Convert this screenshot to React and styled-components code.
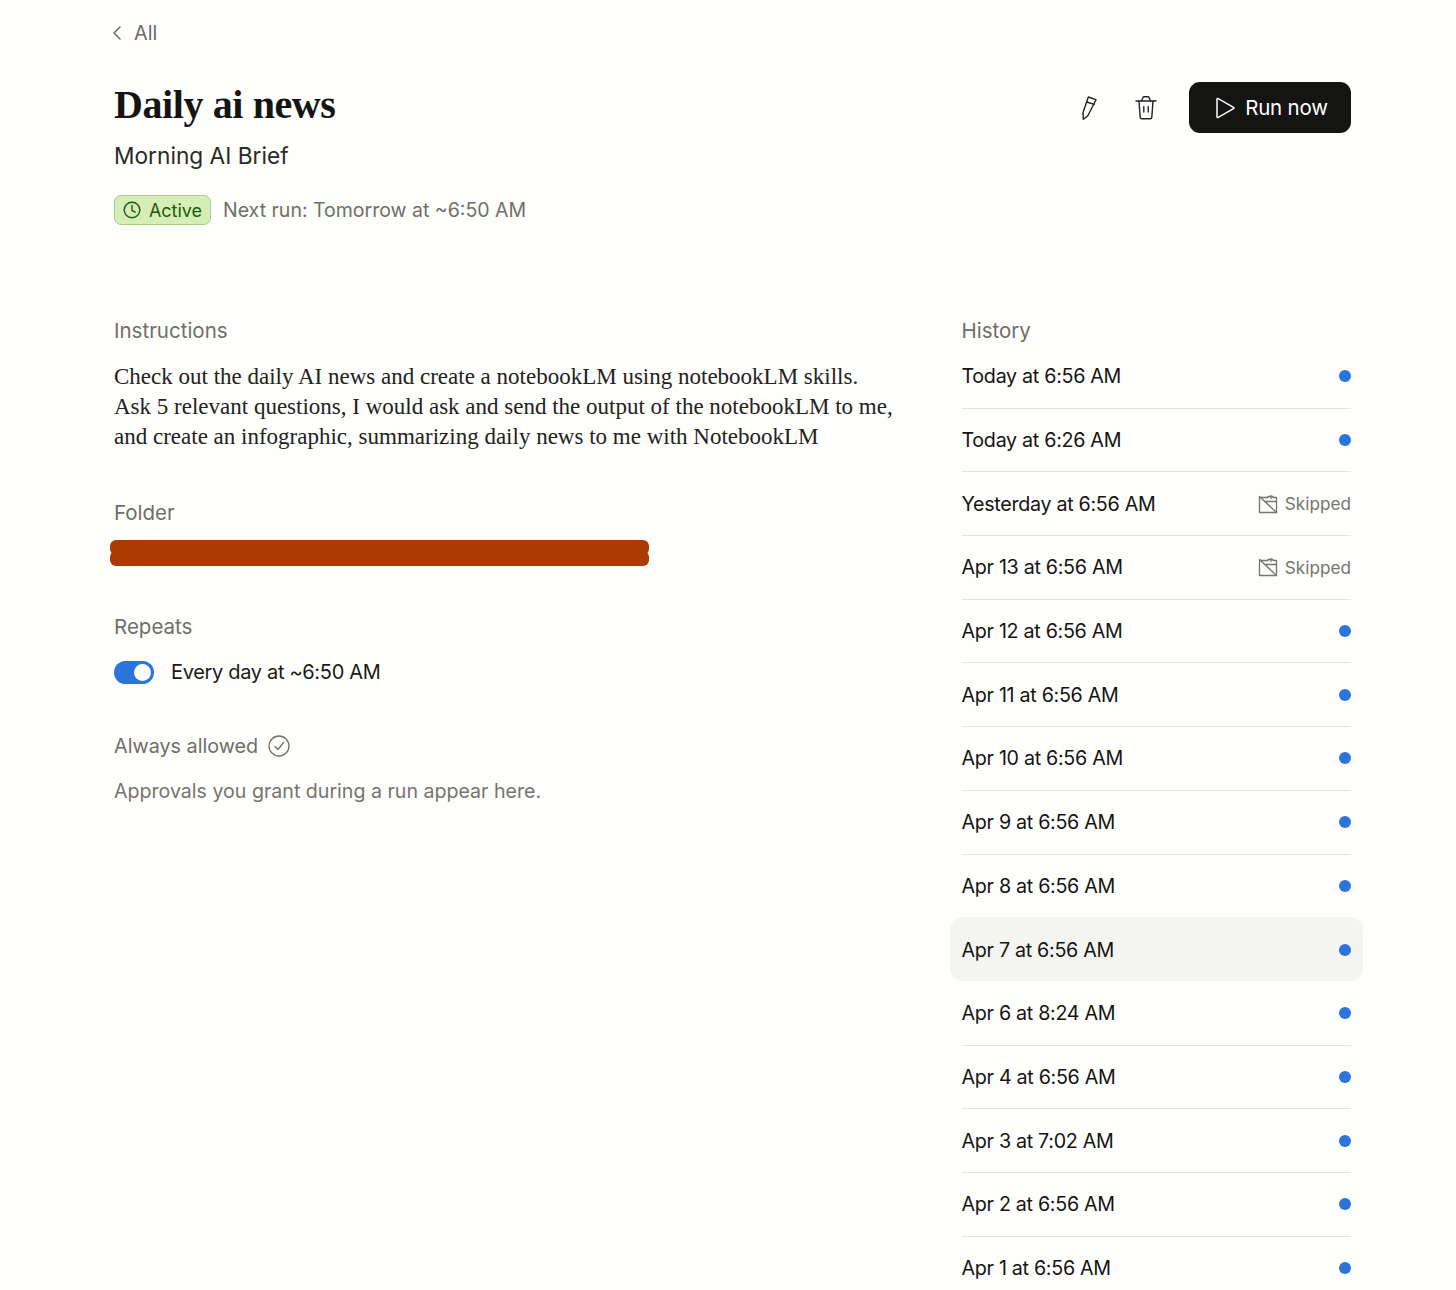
import React from 'react';
import styled, { createGlobalStyle } from 'styled-components';

const Global = createGlobalStyle`
  html, body { margin: 0; padding: 0; background: #fefefc; }
  body { font-family: "Inter", "Liberation Sans", sans-serif; color: #141413; }
`;
const Page = styled.div`
  width: 1456px; height: 1290px; overflow: hidden; box-sizing: border-box;
  padding: 0 105px 0 114px; background: #fefefc;
`;
const Back = styled.div`
  height: 66px; display: flex; align-items: center; gap: 12px; margin-left: -2px;
  color: #6b6a66; font-size: 19.8px;
`;
const Header = styled.header`
  display: flex; justify-content: space-between; align-items: flex-start; height: 251px;
`;
const HeaderText = styled.div`display: flex; flex-direction: column;`;
const Title = styled.h1`
  margin: 16px 0 0; font: 700 40px/46px "Liberation Serif", serif; letter-spacing: -0.4px; color: #141413;
`;
const Subtitle = styled.div`margin-top: 12px; font-size: 22.7px; line-height: 32px; color: #2a2a28;`;
const StatusRow = styled.div`margin-top: 23px; display: flex; align-items: center; gap: 12px;`;
const Badge = styled.div`
  height: 30px; width: 97px; box-sizing: border-box; display: flex; align-items: center; justify-content: center; gap: 8px;
  border: 1px solid #a9cf84; border-radius: 7px; background: #d5edb6; color: #1f5a0c; font-size: 18px;
`;
const Muted = styled.span`color: #6f6e69; font-size: 19.5px;`;
const Actions = styled.div`display: flex; align-items: center; margin-top: 16px;`;
const IconBtn = styled.button`
  width: 26px; height: 26px; padding: 0; border: 0; background: none; color: #222; display: flex; align-items: center; justify-content: center;
  margin-right: ${p => p.$mr}px;
`;
const RunBtn = styled.button`
  width: 162px; height: 51px; border: 0; border-radius: 11px; background: #141413; color: #fff;
  display: flex; align-items: center; justify-content: center; gap: 9px; font: 400 20.5px "Inter", sans-serif; letter-spacing: -0.2px; padding: 0 0 0 2px;
`;
const Columns = styled.div`
  display: grid; grid-template-columns: 778px 389.5px; column-gap: 69.5px; align-items: start;
`;
const Label = styled.div`color: #6f6e69; font-size: ${p => p.$size || 20.5}px; line-height: 28px; display: flex; align-items: center; gap: 10px;`;
const Prose = styled.p`
  margin: 17px 0 0; font: 400 23px/30px "Liberation Serif", serif; color: #222220; white-space: nowrap;
`;
const Section = styled.section`margin-top: ${p => p.$mt}px;`;
const Redact = styled.div`margin: 13px 0 0 -4px; width: 539px;`;
const RedactStrip = styled.div`
  height: 15px; border-radius: 6px; background: #ab3b00; & + & { margin-top: -4px; }
`;
const RepeatRow = styled.div`margin-top: 16px; display: flex; align-items: center; gap: 17px; font-size: 20px; letter-spacing: -0.33px; color: #1a1a18; line-height: 30px;`;
const Toggle = styled.div`
  width: 40px; height: 23px; border-radius: 12px; background: #2a74dc; display: flex; align-items: center; justify-content: flex-end; padding-right: 3px; box-sizing: border-box;
`;
const Knob = styled.div`width: 17px; height: 17px; border-radius: 50%; background: #fff;`;
const Hint = styled.div`margin-top: 17px; color: #76756f; font-size: 19.6px; line-height: 28px;`;
const Rows = styled.ul`list-style: none; margin: 0; padding: 0;`;
const Row = styled.li`
  position: relative; height: 63.7px; box-sizing: border-box; display: flex; align-items: center; justify-content: space-between;
  border-bottom: ${p => p.$noLine ? 'none' : '1px solid #e5e4e0'}; font-size: 19.7px; letter-spacing: -0.3px; color: #141413;
  ${p => p.$active && `
    &::before { content: ''; position: absolute; inset: -1px -12px 1px; background: #f4f4f1; border-radius: 13px; }
    & > * { position: relative; }
  `}
`;
const Dot = styled.span`width: 12px; height: 12px; border-radius: 50%; background: #2a74dc;`;
const Skipped = styled.span`display: flex; align-items: center; gap: 7px; color: #76756f; font-size: 17.2px; letter-spacing: 0;`;

const runs = [
  'Today at 6:56 AM', 'Today at 6:26 AM', 'Yesterday at 6:56 AM', 'Apr 13 at 6:56 AM', 'Apr 12 at 6:56 AM',
  'Apr 11 at 6:56 AM', 'Apr 10 at 6:56 AM', 'Apr 9 at 6:56 AM', 'Apr 8 at 6:56 AM', 'Apr 7 at 6:56 AM',
  'Apr 6 at 8:24 AM', 'Apr 4 at 6:56 AM', 'Apr 3 at 7:02 AM', 'Apr 2 at 6:56 AM', 'Apr 1 at 6:56 AM',
];

const Stroke = { fill: 'none', stroke: 'currentColor', strokeLinecap: 'round', strokeLinejoin: 'round' };

const Chevron = () => (
  <svg width="10" height="16" viewBox="0 0 10 16" {...Stroke} strokeWidth="1.5"><path d="M8 2 2 8l6 6" /></svg>
);
const Clock = () => (
  <svg width="18" height="18" viewBox="0 0 18 18" {...Stroke} strokeWidth="1.4"><circle cx="9" cy="9" r="7.8" /><path d="M9 4.5V9.5l3.2 1.600" /></svg>
);
const Pencil = () => (
  <svg width="18" height="24" viewBox="0 0 18 24" {...Stroke} strokeWidth="1.4"><path d="M8.300 1 16 3.700 7.700 20 3.300 23.300 3 16.700 8.300 1Z" /><path d="M6.700 6 14.300 8.300" /></svg>
);
const Trash = () => (
  <svg width="24" height="24" viewBox="0 0 24 24" {...Stroke} strokeWidth="1.4"><path d="M2 5h20" /><path d="M7.500 5 9 1.500c.2-.5.5-.8 1-.8h4c.5 0 .8.3 1 .8L16.500 5" /><path d="M5 5l1.200 16.300c.1.900.6 1.400 1.500 1.400h8.600c.9 0 1.400-.5 1.500-1.400L19 5" /><path d="M9.800 10.700V16M14.200 10.700V16" /></svg>
);
const Play = () => (
  <svg width="22" height="24" viewBox="0 0 22 24" {...Stroke} strokeWidth="1.5"><path d="M3 3.200v17.600c0 .7.600 1 1.200.6L19.500 12.700c.6-.4.6-1 0-1.400L4.200 2.600C3.600 2.200 3 2.500 3 3.200Z" /></svg>
);
const Check = () => (
  <svg width="22" height="22" viewBox="0 0 22 22" {...Stroke} strokeWidth="1.3"><circle cx="11" cy="11" r="10" /><path d="M7 11.500l3 3 5.500-7" /></svg>
);
const Cal = () => (
  <svg width="20" height="20" viewBox="0 0 20 20" {...Stroke} strokeWidth="1.3"><path d="M1.500 3.500V18.500H18.500V3.500H15M10 3.500H1.500" /><path d="M6.500 7.500H18.500M10 2.500H15M13 1.500V4.500M1.500 2.500 18.500 18.500" /></svg>
);

export default function App() {
  return (
    <Page>
      <Global />
      <Back><Chevron />All</Back>
      <Header>
        <HeaderText>
          <Title>Daily ai news</Title>
          <Subtitle>Morning AI Brief</Subtitle>
          <StatusRow>
            <Badge><Clock />Active</Badge>
            <Muted>Next run: Tomorrow at ~6:50 AM</Muted>
          </StatusRow>
        </HeaderText>
        <Actions>
          <IconBtn $mr={31} aria-label="Edit"><Pencil /></IconBtn>
          <IconBtn $mr={30} aria-label="Delete"><Trash /></IconBtn>
          <RunBtn><Play />Run now</RunBtn>
        </Actions>
      </Header>
      <Columns>
        <div>
          <Label>Instructions</Label>
          <Prose>
            Check out the daily AI news and create a notebookLM using notebookLM skills.<br />
            Ask 5 relevant questions, I would ask and send the output of the notebookLM to me,<br />
            and create an infographic, summarizing daily news to me with NotebookLM
          </Prose>
          <Section $mt={47}>
            <Label>Folder</Label>
            <Redact><RedactStrip /><RedactStrip /></Redact>
          </Section>
          <Section $mt={47}>
            <Label>Repeats</Label>
            <RepeatRow><Toggle><Knob /></Toggle>Every day at ~6:50 AM</RepeatRow>
          </Section>
          <Section $mt={45}>
            <Label $size={19.8}>Always allowed <Check /></Label>
            <Hint>Approvals you grant during a run appear here.</Hint>
          </Section>
        </div>
        <div>
          <Label>History</Label>
          <Rows>
            {runs.map((r, i) => {
              const skipped = i === 2 || i === 3;
              return (
                <Row key={r} $active={i === 9} $noLine={i === 9}>
                  <span>{r}</span>
                  {skipped ? <Skipped><Cal />Skipped</Skipped> : <Dot />}
                </Row>
              );
            })}
          </Rows>
        </div>
      </Columns>
    </Page>
  );
}
